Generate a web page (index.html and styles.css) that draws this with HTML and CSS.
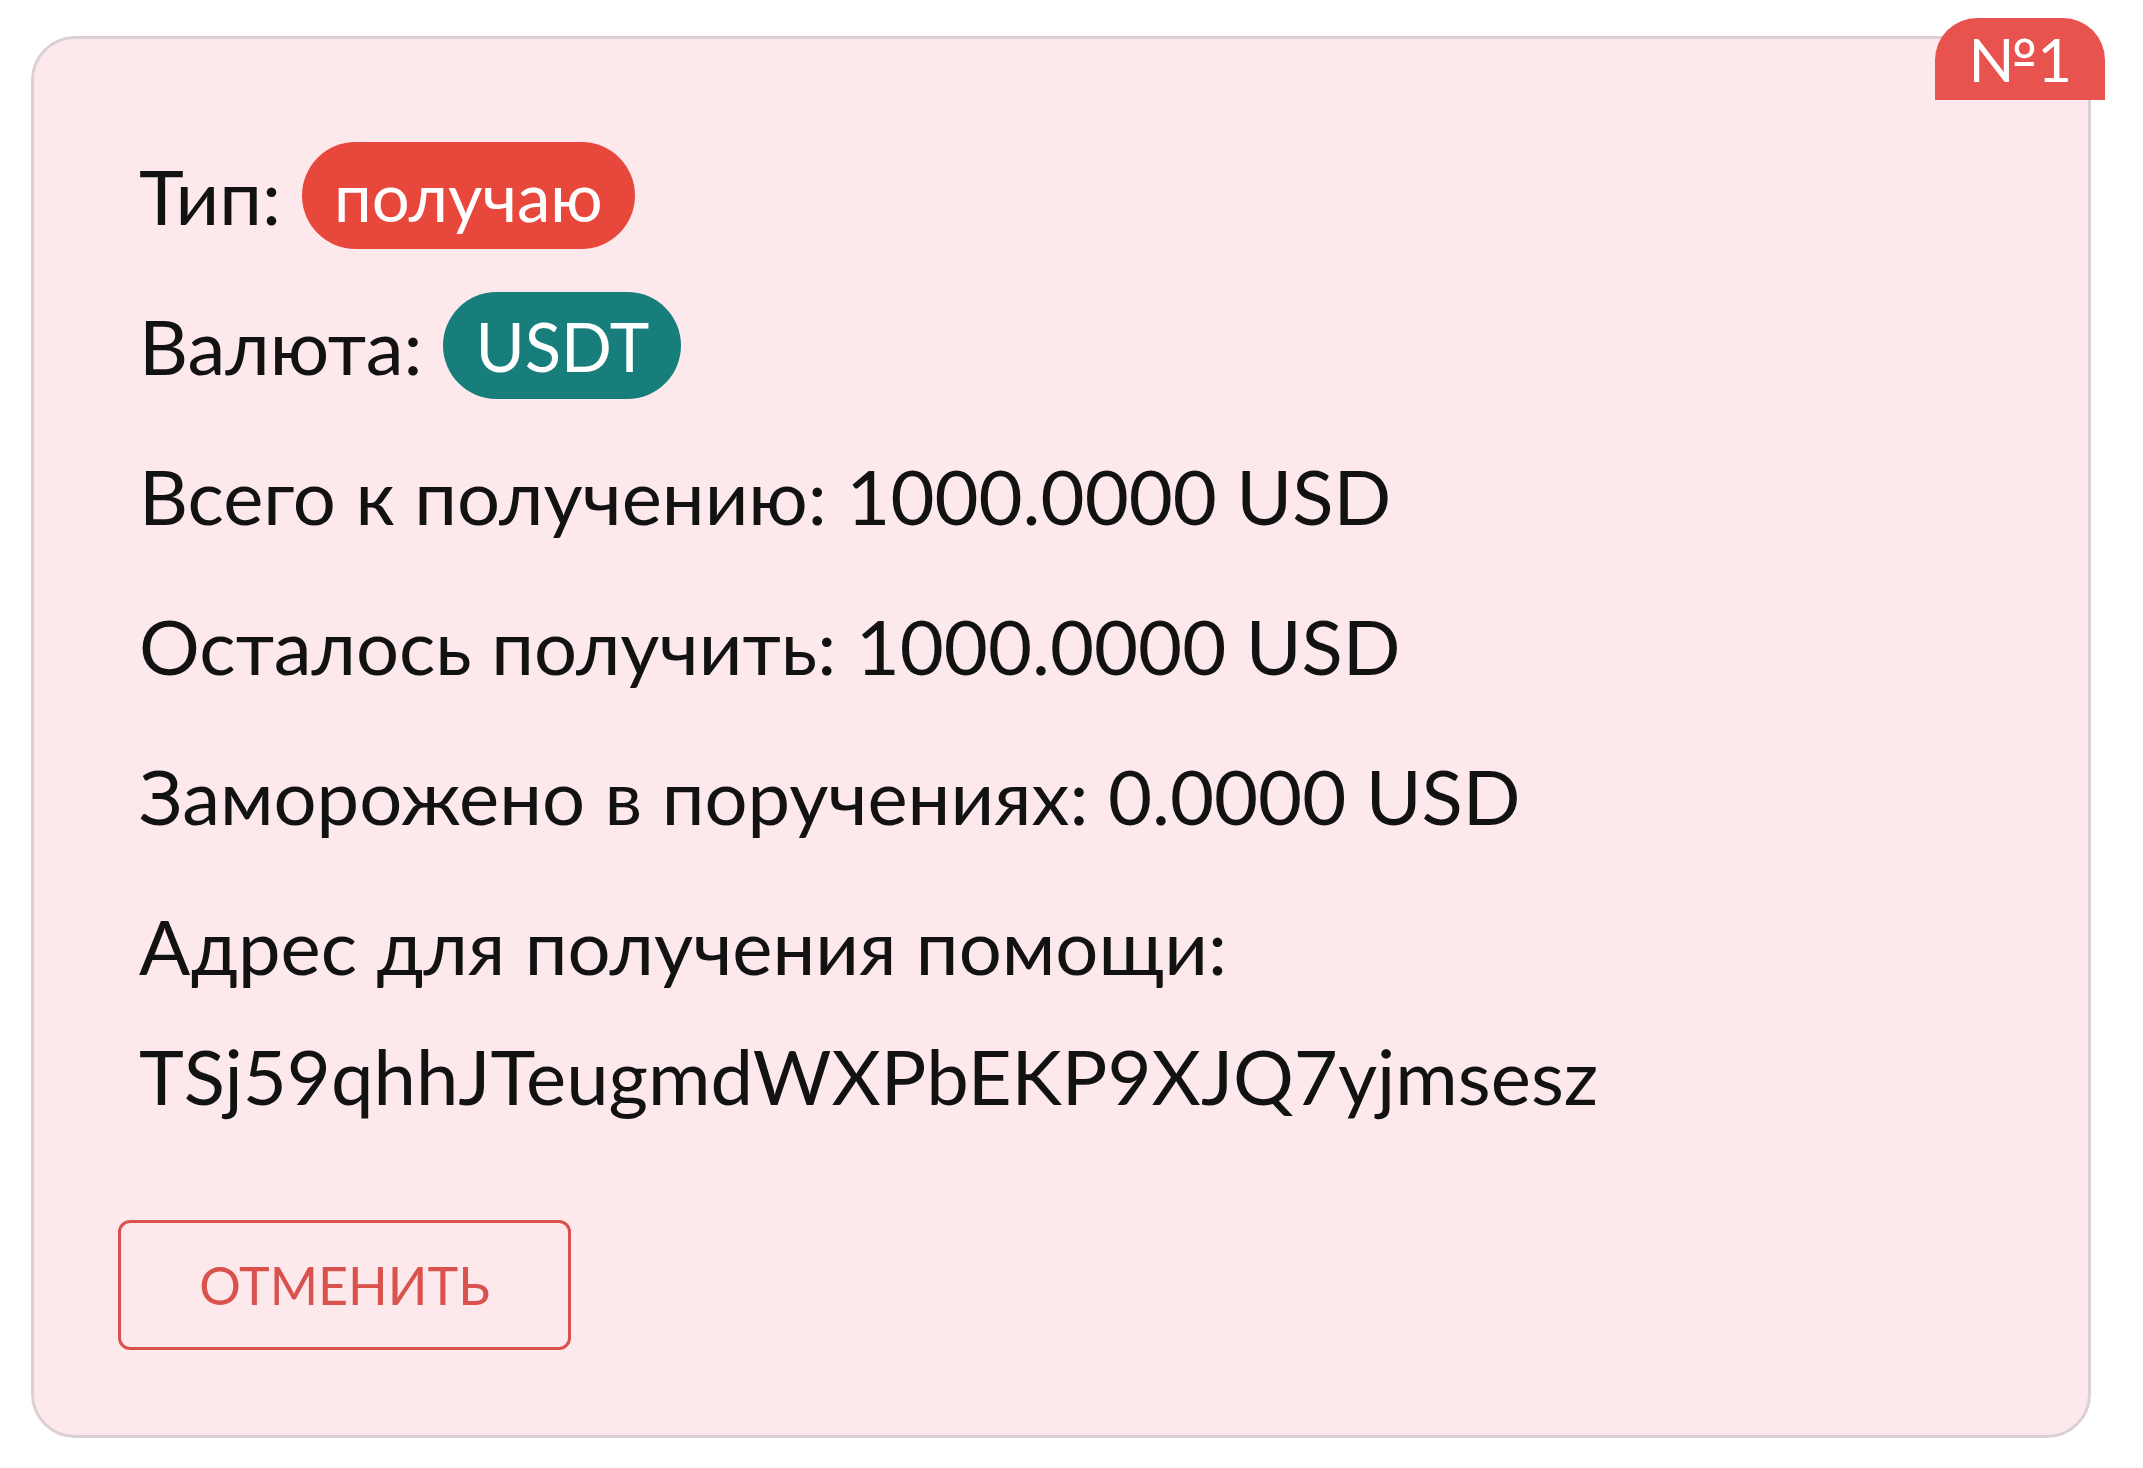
FILE: index.html
```html
<!DOCTYPE html>
<html lang="ru">
<head>
<meta charset="utf-8">
<link rel="stylesheet" href="styles.css">
</head>
<body>
<div class="page">
  <div class="card">
    <div class="num">№1</div>
    <div class="row"><span class="label">Тип:</span><span class="pill pill-red">получаю</span></div>
    <div class="row"><span class="label">Валюта:</span><span class="pill pill-teal">USDT</span></div>
    <div class="row">Всего к получению: 1000.0000 USD</div>
    <div class="row">Осталось получить: 1000.0000 USD</div>
    <div class="row">Заморожено в поручениях: 0.0000 USD</div>
    <div class="row">Адрес для получения помощи:</div>
    <div class="row row-addr">TSj59qhhJTeugmdWXPbEKP9XJQ7yjmsesz</div>
    <button class="btn">ОТМЕНИТЬ</button>
  </div>
</div>
</body>
</html>
```
FILE: styles.css
```css
html, body {
  margin: 0;
  padding: 0;
  background: #ffffff;
}
.page {
  padding: 36px 52px 30px 31px;
  font-family: "Lato", "Noto Sans", sans-serif;
  color: #121212;
}
.card {
  position: relative;
  background: #fde9ec;
  border: 3px solid #ddd0d4;
  border-radius: 44px;
  padding: 103px 40px 85px 84px;
  display: flex;
  flex-direction: column;
  gap: 43px;
}
.num {
  position: absolute;
  top: -21px;
  right: -17px;
  width: 170px;
  height: 82px;
  background: #e8524f;
  color: #fff;
  border-radius: 42px 42px 0 0;
  font-size: 60px;
  line-height: 82px;
  text-align: center;
}
.row {
  height: 107px;
  display: flex;
  align-items: center;
  padding-left: 21px;
  font-size: 76px;
  white-space: nowrap;
}
.row-addr {
  margin-top: -20px;
}
.label {
  margin-right: 21px;
}
.pill {
  height: 107px;
  border-radius: 54px;
  color: #fff;
  font-size: 67px;
  display: inline-flex;
  align-items: center;
  padding: 0 32px;
}
.pill-red { background: #e8483c; }
.pill-teal { background: #177e7c; }
.btn {
  align-self: flex-start;
  margin-top: 48px;
  width: 453px;
  height: 130px;
  background: transparent;
  border: 3px solid #d9524d;
  border-radius: 12px;
  color: #d9524d;
  font-family: "Lato", "Noto Sans", sans-serif;
  font-size: 52px;
  padding: 0;
}
```
